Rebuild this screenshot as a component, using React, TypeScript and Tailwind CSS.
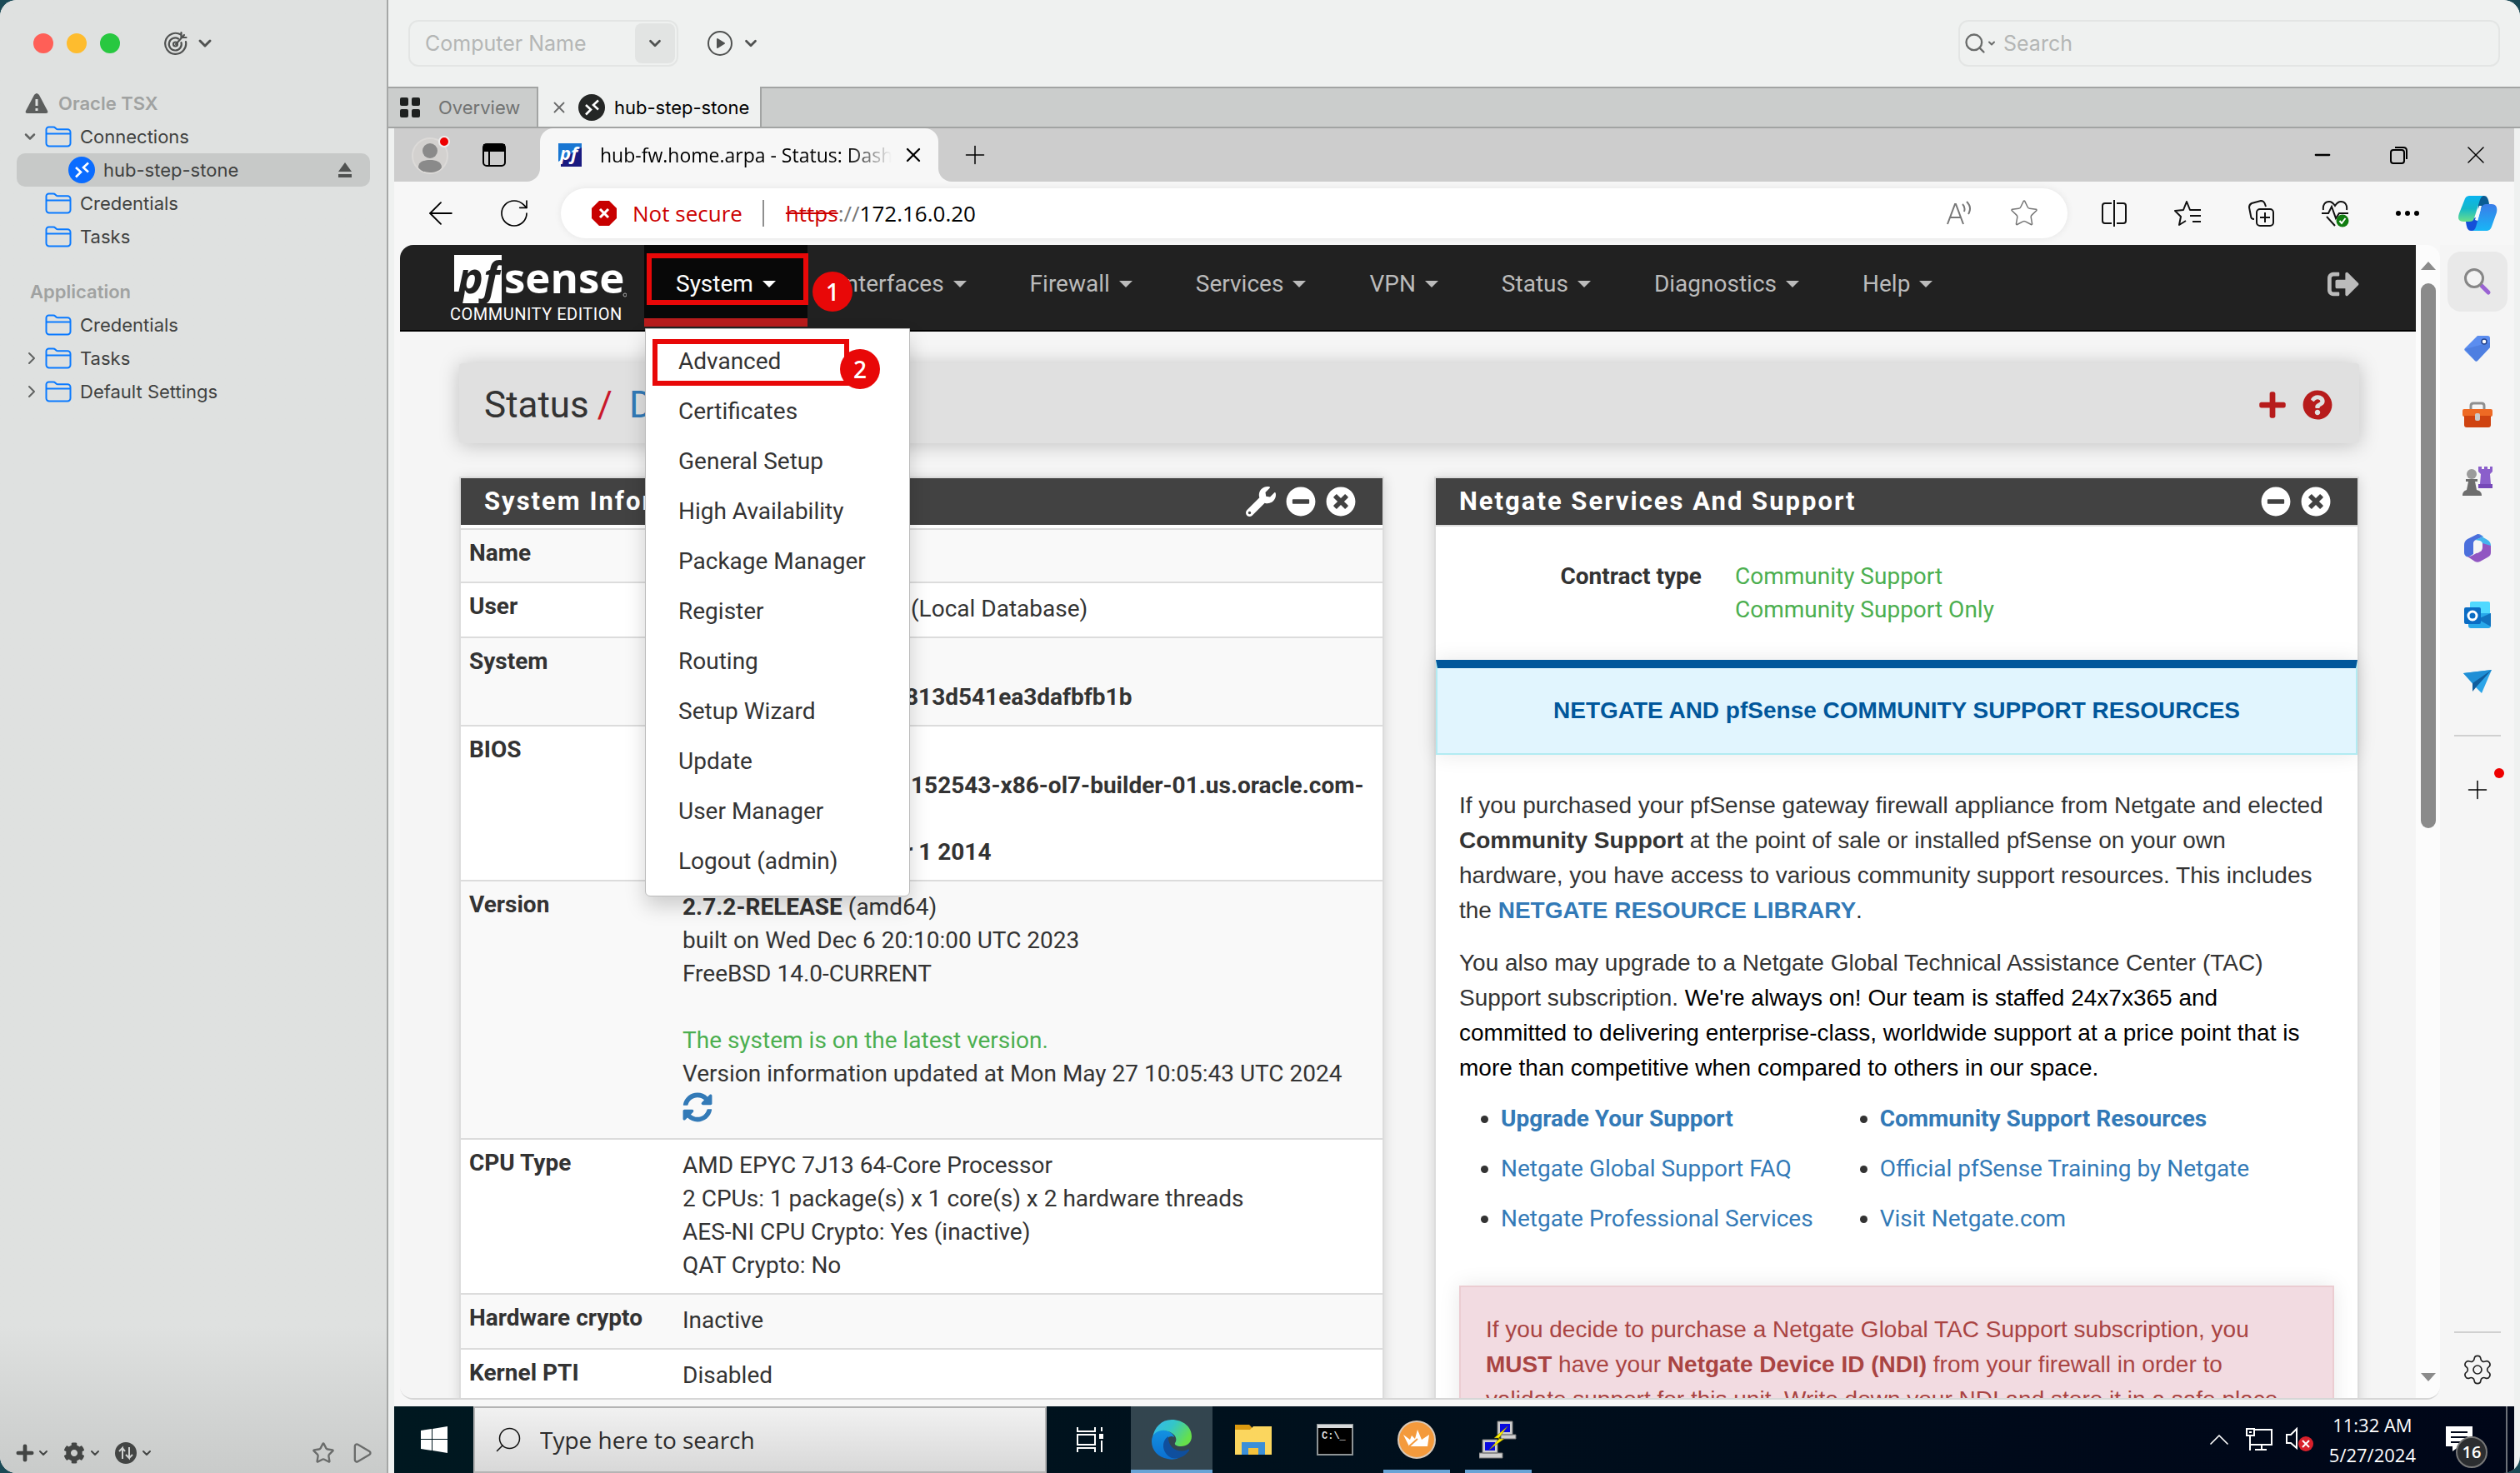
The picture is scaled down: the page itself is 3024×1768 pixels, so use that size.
import type { ReactNode } from "react";
import clsx from "clsx";
import {
  ArrowLeft,
  ChevronDown,
  ChevronRight,
  ChevronUp,
  Minus,
  Play,
  Plus,
  RotateCw,
  Search,
  Settings,
  Star,
  X,
} from "lucide-react";
import {
  FaCog,
  FaMinusCircle,
  FaPlus,
  FaQuestionCircle,
  FaSignOutAlt,
  FaSyncAlt,
  FaTimesCircle,
  FaWrench,
} from "react-icons/fa";

const navItems = ["Interfaces", "Firewall", "Services", "VPN", "Status", "Diagnostics", "Help"];

const systemMenu = [
  "Advanced",
  "Certificates",
  "General Setup",
  "High Availability",
  "Package Manager",
  "Register",
  "Routing",
  "Setup Wizard",
  "Update",
  "User Manager",
  "Logout (admin)",
];

/* ---------- small drawings ---------- */

function FolderIcon() {
  return (
    <svg viewBox="0 0 32 26" className="h-[26px] w-8 shrink-0" fill="none" stroke="#0a7aff" strokeWidth="2">
      <path d="M1.5 21V4.500a3 3 0 0 1 3-3h5.500c1.200 0 1.800.4 2.600 1.200l.8.8c.6.6 1.200.8 2 .8H27a3.500 3.500 0 0 1 3.500 3.500V21a3.500 3.500 0 0 1-3.500 3.500H5A3.500 3.500 0 0 1 1.500 21Z" />
      <path d="M1.500 9.500h29" />
    </svg>
  );
}

function RemoteIcon({ color }: { color: string }) {
  return (
    <svg viewBox="0 0 32 32" className="size-8 shrink-0">
      <circle cx="16" cy="16" r="16" fill={color} />
      <path d="m9 13 6 5.500-6 6M24 7.500l-6 5.500 6 5.500" fill="none" stroke="#fff" strokeWidth="2.600" />
    </svg>
  );
}

function TargetIcon() {
  return (
    <svg viewBox="0 0 30 30" className="size-[30px]" fill="none" stroke="#505251" strokeWidth="2.200" strokeLinecap="round">
      <path d="M21 4.500A12.500 12.500 0 1 0 27 13" />
      <path d="M18 9.500A7.500 7.500 0 1 0 21.500 14" />
      <path d="M15 16 25 5m-3.500-3v6h6" />
      <circle cx="14.500" cy="16" r="2.500" />
    </svg>
  );
}

function ConnectIcon() {
  return (
    <svg viewBox="0 0 32 32" className="size-8" fill="none" stroke="#505251" strokeWidth="2">
      <circle cx="16" cy="16" r="14" />
      <path d="m13 11 8 5-8 5Z" fill="#505251" strokeLinejoin="round" />
    </svg>
  );
}

function PfFavicon() {
  return (
    <svg viewBox="0 0 28 28" className="size-7 shrink-0">
      <path d="M0 0h28v6L0 22Z" fill="#1976d2" />
      <path d="M28 5v23H3v-8Z" fill="#1a1a80" />
      <text x="2" y="20" fontFamily="Open Sans" fontWeight="700" fontStyle="italic" fontSize="22" fill="#fff">
        pf
      </text>
    </svg>
  );
}

function PfSenseLogo() {
  return (
    <svg viewBox="0 0 212 60" className="h-[60px] w-[212px]" aria-label="pfSense">
      <path d="M5 1h57v8c-8-3-12 4-13 10h11l-1 5v35H10l4-14H5Z" fill="#fff" />
      <path d="M61 2h1v57H44Z" fill="#fff" />
      <text x="9" y="47" fontFamily="Open Sans" fontWeight="700" fontStyle="italic" fontSize="52" fill="#212121">
        pf
      </text>
      <text x="65" y="47" fontFamily="Open Sans" fontWeight="700" fontSize="51" fill="#fff">
        sense
      </text>
      <circle cx="210" cy="49" r="2" fill="none" stroke="#aaa" />
    </svg>
  );
}

function AvatarIcon() {
  return (
    <svg viewBox="0 0 48 48" className="size-12">
      <circle cx="23" cy="25" r="21" fill="#d3d1cf" stroke="#dcdad8" strokeWidth="2" />
      <circle cx="23" cy="19" r="9" fill="#8a8a8a" />
      <path d="M9 39c0-7 7-9 14-9s14 2 14 9c-5 8-23 8-28 0Z" fill="#8a8a8a" />
      <circle cx="40" cy="8" r="6" fill="#e00" stroke="#eee" strokeWidth="2" />
    </svg>
  );
}

function TabPaneIcon() {
  return (
    <svg viewBox="0 0 28 28" className="size-7" fill="none" stroke="#000" strokeWidth="2">
      <rect x="1" y="1" width="26" height="26" rx="4" />
      <path d="M2 2h24v7H2Z" fill="#000" />
      <path d="M8 9v18" />
    </svg>
  );
}

function ReadAloudIcon() {
  return (
    <svg viewBox="0 0 32 32" className="size-8" fill="none" stroke="#777" strokeWidth="2">
      <path d="m2 29 9-24h1l9 24M5 21h13M20 5c3 3 3 6 2 9M25 2c5 5 5 10 2 15" />
    </svg>
  );
}

function SplitIcon() {
  return (
    <svg viewBox="0 0 32 32" className="size-8" fill="none" stroke="#111" strokeWidth="2">
      <path d="M13 4H5a3 3 0 0 0-3 3v18a3 3 0 0 0 3 3h8M19 4h8a3 3 0 0 1 3 3v18a3 3 0 0 1-3 3h-8M16 0v32" />
    </svg>
  );
}

function FavoritesIcon() {
  return (
    <svg viewBox="0 0 32 32" className="size-8" fill="none" stroke="#111" strokeWidth="2" strokeLinejoin="round">
      <path d="M21 12h-2l-4-10-4 10-10 1 7 7-2 10 8-5M21 12h11M19 19h13M22 26h10" />
    </svg>
  );
}

function CollectionsIcon() {
  return (
    <svg viewBox="0 0 32 32" className="size-8" fill="none" stroke="#111" strokeWidth="2">
      <path d="M8 23c-3 0-4-1-4-4L2 9c0-3 1-4 3-5l11-3c3 0 4 1 5 4l1 3" />
      <rect x="11" y="11" width="20" height="20" rx="4" />
      <path d="M21 15v12M15 21h12" />
    </svg>
  );
}

function EssentialsIcon() {
  return (
    <svg viewBox="0 0 34 34" className="size-[34px]" fill="none" stroke="#111" strokeWidth="2">
      <path d="M3 13C2 7 5 3 10 3c3 0 5 2 7 5 2-3 4-5 7-5 5 0 8 4 7 10M1 17h8l4-8 5 14 4-6h11M7 21l10 11" />
      <circle cx="26" cy="26" r="7.500" fill="#107c10" stroke="none" />
      <path d="m22.500 26 2.500 3 4.500-6" stroke="#fff" />
    </svg>
  );
}

function CopilotIcon() {
  return (
    <svg viewBox="0 0 48 44" className="h-11 w-12">
      <defs>
        <linearGradient id="copilotLeft" x1="0" y1="0" x2="0" y2="1">
          <stop offset="0" stopColor="#0ab4f0" />
          <stop offset="0.500" stopColor="#14b8c8" />
          <stop offset="1" stopColor="#6be08a" />
        </linearGradient>
        <linearGradient id="copilotRight" x1="0" y1="0" x2="0" y2="1">
          <stop offset="0" stopColor="#3a7ce8" />
          <stop offset="1" stopColor="#18b6f6" />
        </linearGradient>
      </defs>
      <path d="M24 1h8c3 0 5 3 6 10l-13 8Z" fill="#0a5c94" />
      <path d="M24 43h-8c-4 0-5-4-6-11l14-6Z" fill="#1450d8" />
      <path d="M14 1h17c-3 1-4 4-5 8l-6 19c-1 3-3 4-6 4H7c-6 0-7-4-5-10L8 7c1-4 3-6 6-6Z" fill="url(#copilotLeft)" />
      <path d="M34 43H18c3-1 4-4 5-8l5-18c1-4 3-6 6-6h7c6 0 7 5 6 10l-6 17c-1 3-3 5-7 5Z" fill="url(#copilotRight)" />
      <path d="m21 30 5-17h3l-5 18Z" fill="#f4fbff" />
    </svg>
  );
}

function SideSearchIcon() {
  return (
    <svg viewBox="0 0 34 34" className="size-[34px]" fill="none">
      <path d="m22 22 8 8" stroke="#9a63d3" strokeWidth="5" strokeLinecap="round" />
      <circle cx="13" cy="13" r="10.500" fill="#f3f3f3" stroke="#868686" strokeWidth="3" />
    </svg>
  );
}

function TagIcon() {
  return (
    <svg viewBox="0 0 34 34" className="size-[34px]">
      <path d="M17 2h12c2 0 3 1 3 3v11L17 32c-1 1-2 1-3 0L2 20c-1-1-1-2 0-3Z" fill="#5b8def" />
      <path d="M2 18 32 10v6L17 32c-1 1-2 1-3 0Z" fill="#4676d7" opacity=".6" />
      <circle cx="25" cy="9" r="3" fill="#fff" stroke="#274690" strokeWidth="1.500" />
    </svg>
  );
}

function ToolboxIcon() {
  return (
    <svg viewBox="0 0 36 32" className="h-8 w-9">
      <path d="M10 9V5c0-2 1-3 3-3h10c2 0 3 1 3 3v4" fill="none" stroke="#8f8f8f" strokeWidth="3" />
      <rect y="9" width="36" height="9" rx="2" fill="#ee6a24" />
      <path d="M2 17h32v11c0 2-1 3-3 3H5c-2 0-3-1-3-3Z" fill="#cf4310" />
      <rect x="15" y="14" width="6" height="9" rx="2" fill="#c9c9c9" />
    </svg>
  );
}

function GamesIcon() {
  return (
    <svg viewBox="0 0 36 38" className="h-[38px] w-9">
      <path d="M19 1h4v3h3V1h4v3h3V1h3v6l-3 3 1 12H21l1-12-3-3Z" fill="#8b5fcb" />
      <path d="M19 22h17v5H19Z" fill="#7648b8" />
      <circle cx="11" cy="10" r="6" fill="#9b9b9b" />
      <path d="M4 16h14v3h-3l2 10c4 1 6 3 6 7H0c0-4 2-6 5-7l2-10H4Z" fill="#6d6d6d" />
    </svg>
  );
}

function Microsoft365Icon() {
  return (
    <svg viewBox="0 0 34 36" className="h-9 w-[34px]">
      <path d="M17 1 5 7c-3 2-4 4-4 7v9c0 4 3 6 6 5l5-3V12c0-2 1-3 3-4l9-4-3-2c-1-1-3-1-4-1Z" fill="#4b6fdc" />
      <path d="m17 1 12 7c3 2 4 4 4 7v8l-10-6v-4c0-2-1-3-3-4l-6-1 10-4Z" fill="#45b4ee" />
      <path d="M33 15v8c0 3-1 4-4 6l-9 5c-2 1-4 1-6 0L5 28c3 0 5-1 7-2l9-5c2-1 2-3 2-5v-4Z" fill="#9156c2" />
      <path d="m17 12 5 3v6l-5 3-5-3v-6Z" fill="#f5f5f5" />
    </svg>
  );
}

function OutlookIcon() {
  return (
    <svg viewBox="0 0 34 34" className="size-[34px]">
      <rect x="8" y="1" width="24" height="20" rx="2" fill="#50d9ff" />
      <path d="M6 15h27v15c0 2-1 3-3 3H9c-2 0-3-1-3-3Z" fill="#28a8ea" />
      <path d="M33 15v16L17 22Z" fill="#1173c0" />
      <rect x="1" y="8" width="20" height="20" rx="2" fill="#0a6cc4" />
      <circle cx="11" cy="18" r="5" fill="none" stroke="#fff" strokeWidth="3" />
    </svg>
  );
}

function DropIcon() {
  return (
    <svg viewBox="0 0 34 28" className="h-7 w-[34px]">
      <path d="M0 4 34 0 22 28l-7-7Z" fill="#2ba4e8" />
      <path d="m0 4 34-4-23 16Z" fill="#1f8fd6" />
      <path d="M11 16 34 0 16 20l-5 6Z" fill="#0f5d9e" />
    </svg>
  );
}

function WindowsLogo() {
  return (
    <svg viewBox="0 0 32 32" className="size-8" fill="#fff">
      <path d="m0 5 13-2v12H0ZM14 3l18-3v15H14ZM0 16h13v13L0 27ZM14 16h18v16l-18-3Z" />
    </svg>
  );
}

function TaskViewIcon() {
  return (
    <svg viewBox="0 0 32 32" className="size-8" fill="none" stroke="#fff" strokeWidth="2">
      <path d="M1 1v5h21V1M1 31v-5h21v5M1 10h21v12H1ZM30 1v5M30 17v14" />
      <path d="M27 9h6v6h-6Z" fill="#fff" stroke="none" />
    </svg>
  );
}

function EdgeIcon() {
  return (
    <svg viewBox="0 0 48 48" className="size-12">
      <defs>
        <linearGradient id="edgeTop" x1="0" y1="0" x2="1" y2="0.500">
          <stop offset="0" stopColor="#35b8f1" />
          <stop offset="0.500" stopColor="#34c6c8" />
          <stop offset="1" stopColor="#66e04a" />
        </linearGradient>
        <linearGradient id="edgeSide" x1="0" y1="0" x2="0" y2="1">
          <stop offset="0" stopColor="#1391e0" />
          <stop offset="1" stopColor="#0b6fd0" />
        </linearGradient>
      </defs>
      <path d="M1 22C3 9 12 0 24 0c14 0 24 9 24 20 0 8-6 12-13 12-5 0-8-2-7-4 3-4 1-9-4-12C15 11 5 14 1 22Z" fill="url(#edgeTop)" />
      <path d="M0 26c0-9 8-14 16-13 6 1 10 4 11 8-5-3-9 1-9 7 0 8 5 16 14 18-4 2-9 2-13 1C8 45 0 37 0 26Z" fill="url(#edgeSide)" />
      <path d="M20 20c-9 6-8 20 4 26 9 2 17-3 21-9 0-1 0-2-2-1-12 5-24-3-23-16Z" fill="#0f4f9e" />
    </svg>
  );
}

function ExplorerIcon() {
  return (
    <svg viewBox="0 0 44 36" className="h-9 w-11">
      <path d="M0 0h17l3 3v5H0Z" fill="#dc9a10" />
      <path d="M0 6h18l4-4h22v34H0Z" fill="#fbd65e" />
      <path d="M8 21h28v15h-8v-8H16v8H8Z" fill="#3b8fd8" />
      <path d="M16 28h12v8H16Z" fill="#f4c23c" />
    </svg>
  );
}

function TerminalIcon() {
  return (
    <svg viewBox="0 0 44 38" className="h-[38px] w-11">
      <rect x="1" y="1" width="42" height="36" fill="#000" stroke="#8e9496" strokeWidth="2" />
      <path d="M1 1h42v4H1Z" fill="#d7dadb" />
      <text x="6" y="18" fontFamily="Liberation Mono" fontWeight="700" fontSize="12" fill="#ddd">
        C:\_
      </text>
    </svg>
  );
}

function CrownIcon() {
  return (
    <svg viewBox="0 0 46 46" className="size-[46px]">
      <circle cx="23" cy="23" r="22" fill="#f49a3c" stroke="#d9c9b8" strokeWidth="2" />
      <path d="m7 17 8 6 2-5 4 4 3-11 5 12 9-6-2 14H14Z" fill="#fff" />
      <path d="m14 31 10-9" stroke="#f49a3c" strokeWidth="2" />
    </svg>
  );
}

function PuttyIcon() {
  return (
    <svg viewBox="0 0 46 48" className="h-12 w-[46px]">
      <path d="M22 2h18v16H22ZM26 18h18v5H26ZM4 24h18v16H4ZM0 40h28v6H0Z" fill="#cfcfcf" stroke="#777" />
      <path d="M25 5h12v10H25ZM7 27h12v10H7Z" fill="#0909e0" />
      <path d="M34 8 18 22h7L12 36l18-13h-7Z" fill="#ffee00" stroke="#776f00" strokeWidth=".5" />
    </svg>
  );
}

function NetworkIcon() {
  return (
    <svg viewBox="0 0 32 28" className="h-7 w-8" fill="none" stroke="#fff" strokeWidth="2">
      <path d="M10 2h21v18H6M19 20v6M11 26h14M1 1h9v8H1ZM5 9v18M4 5h3" />
    </svg>
  );
}

function VolumeMutedIcon() {
  return (
    <svg viewBox="0 0 34 30" className="h-[30px] w-[34px]">
      <path d="M1 9h5l7-7v23l-7-6H1Z" fill="none" stroke="#fff" strokeWidth="2" />
      <circle cx="24" cy="20" r="9" fill="#d9202b" />
      <path d="m20 16 8 8m0-8-8 8" stroke="#fff" strokeWidth="2" />
    </svg>
  );
}

/* ---------- connection manager ---------- */

function TreeRow({ label, toggle }: { label: string; toggle?: "open" | "closed" }) {
  return (
    <li className="flex h-10 items-center pl-[26px]">
      <span className="flex w-7 items-center text-[#626463]">
        {toggle === "open" && <ChevronDown className="size-5" strokeWidth={3} />}
        {toggle === "closed" && <ChevronRight className="size-6" strokeWidth={2} />}
      </span>
      <FolderIcon />
      <span className="ml-[10px]">{label}</span>
    </li>
  );
}

function Sidebar() {
  return (
    <aside className="flex w-[466px] shrink-0 flex-col border-r-2 border-[#a5a7a6] bg-linear-to-b from-[#dfe1e0] from-90% to-[#c9cbca] text-[22px] text-[#3f4140]">
      <div className="flex h-[104px] items-center pl-10">
        <div className="flex gap-4">
          <span className="size-6 rounded-full bg-[#ff5f57]" />
          <span className="size-6 rounded-full bg-[#febc2e]" />
          <span className="size-6 rounded-full bg-[#28c840]" />
        </div>
        <button className="ml-[52px] flex items-center gap-2" aria-label="View options">
          <TargetIcon />
          <ChevronDown className="size-6 text-[#505251]" strokeWidth={3} />
        </button>
      </div>

      <div className="flex h-10 items-center pl-[30px] font-semibold text-[#a0a2a1]">
        <svg viewBox="0 0 28 26" className="h-[26px] w-7">
          <path d="M14 1c1 0 2 1 3 2l10 19c1 2 0 3-2 3H3c-2 0-3-1-2-3L11 3c1-1 2-2 3-2Z" fill="#5c5e5d" />
          <path d="M14 8v8M14 19v3" stroke="#dfe1e0" strokeWidth="3" />
        </svg>
        <h2 className="ml-3">Oracle TSX</h2>
      </div>
      <ul>
        <TreeRow label="Connections" toggle="open" />
        <li className="mr-5 ml-5 flex h-10 items-center rounded-[10px] bg-[#c7c9c8] pr-[22px] pl-[62px]">
          <RemoteIcon color="#0a6cff" />
          <span className="ml-[10px] flex-1">hub-step-stone</span>
          <button aria-label="Disconnect">
            <svg viewBox="0 0 16 18" className="h-[18px] w-4" fill="#505251">
              <path d="m8 0 8 11H0ZM0 14h16v4H0Z" />
            </svg>
          </button>
        </li>
        <TreeRow label="Credentials" />
        <TreeRow label="Tasks" />
      </ul>

      <h2 className="mt-[26px] flex h-10 items-center pl-9 font-semibold text-[#a0a2a1]">Application</h2>
      <ul>
        <TreeRow label="Credentials" />
        <TreeRow label="Tasks" toggle="closed" />
        <TreeRow label="Default Settings" toggle="closed" />
      </ul>

      <div className="mt-auto flex h-12 items-center pr-4 pl-4 text-[#434544]">
        <button className="flex items-center" aria-label="Add">
          <Plus className="size-7" strokeWidth={4} />
          <ChevronDown className="size-4" strokeWidth={3} />
        </button>
        <button className="ml-4 flex items-center gap-1" aria-label="Settings">
          <FaCog className="size-[26px]" />
          <ChevronDown className="size-4" strokeWidth={3} />
        </button>
        <button className="ml-4 flex items-center gap-1" aria-label="Sort">
          <svg viewBox="0 0 26 26" className="size-[26px]">
            <circle cx="13" cy="13" r="13" fill="#434544" />
            <path d="M9 20V7L5 11M9 7l3 4M17 6v13l-4-4M17 19l4-4" fill="none" stroke="#d0d2d1" strokeWidth="2" />
          </svg>
          <ChevronDown className="size-4" strokeWidth={3} />
        </button>
        <button className="ml-auto" aria-label="Favorite">
          <Star className="size-7 text-[#6a6c6b]" strokeWidth={2} />
        </button>
        <button className="ml-[18px]" aria-label="Run">
          <Play className="size-7 text-[#6a6c6b]" strokeWidth={2} />
        </button>
      </div>
    </aside>
  );
}

function HostToolbar() {
  return (
    <div className="flex h-[104px] shrink-0 items-center bg-[#eff1f0] pr-6 pl-6">
      <div className="flex h-14 w-[324px] items-center rounded-xl border-2 border-[#e3e5e4] pr-[2px]">
        <input
          aria-label="Computer name"
          placeholder="Computer Name"
          className="min-w-0 flex-1 pt-[2px] pl-[18px] text-[25px] outline-none placeholder:text-[#b4b6b5]"
        />
        <button className="flex h-12 w-12 items-center justify-center rounded-lg bg-[#e2e4e3]" aria-label="Recent computers">
          <ChevronDown className="size-[22px] text-[#505251]" strokeWidth={3} />
        </button>
      </div>
      <button className="ml-[34px] flex items-center gap-[10px] text-[#505251]" aria-label="Connect">
        <ConnectIcon />
        <ChevronDown className="size-[22px]" strokeWidth={3} />
      </button>
      <label className="ml-auto flex h-14 w-[650px] items-center rounded-xl border-2 border-[#e3e5e4] pl-1">
        <Search className="size-7 text-[#6a6c6b]" strokeWidth={2} />
        <ChevronDown className="size-3 text-[#6a6c6b]" strokeWidth={4} />
        <input
          aria-label="Search"
          placeholder="Search"
          className="ml-2 min-w-0 flex-1 pt-[2px] text-[25px] outline-none placeholder:text-[#b4b6b5]"
        />
      </label>
    </div>
  );
}

function HostTabs() {
  return (
    <div className="flex h-[50px] shrink-0 border-b-2 border-[#a2a4a3] bg-[#cbcdcc] text-[22px]">
      <button className="flex w-[180px] items-center border-t-2 border-r-2 border-[#a2a4a3] pl-[14px] text-[#717372]">
        <svg viewBox="0 0 24 24" className="size-6" fill="#1e201f">
          <rect width="10" height="10" rx="2" />
          <rect x="14" width="10" height="10" rx="2" />
          <rect y="14" width="10" height="10" rx="2" />
          <rect x="14" y="14" width="10" height="10" rx="2" />
        </svg>
        <span className="ml-[22px]">Overview</span>
      </button>
      <button className="flex w-[266px] items-center bg-[#eff1f0] pt-[2px] pl-[14px] text-black">
        <X className="size-[22px] text-[#6a6c6b]" strokeWidth={2} />
        <span className="ml-3 flex">
          <RemoteIcon color="#242625" />
        </span>
        <span className="ml-[11px]">hub-step-stone</span>
      </button>
      <div className="flex-1 border-t-2 border-l-2 border-[#a2a4a3]" />
    </div>
  );
}

/* ---------- browser chrome ---------- */

function BrowserTabs() {
  return (
    <div className="flex h-16 shrink-0 items-center bg-[#cdcdcd] font-['Open_Sans',sans-serif]">
      <div className="h-16 w-[175px] bg-[#f7f7f7]">
        <div className="flex h-16 items-center rounded-br-2xl bg-[#cdcdcd] pl-5">
          <button aria-label="Profile">
            <AvatarIcon />
          </button>
          <button className="ml-[38px]" aria-label="Tab actions">
            <TabPaneIcon />
          </button>
        </div>
      </div>
      <div className="flex h-16 w-[478px] items-center rounded-t-2xl bg-[#f7f7f7] pr-4 pl-[22px]">
        <PfFavicon />
        <span className="ml-[22px] flex-1 overflow-hidden bg-linear-to-r from-black from-85% to-transparent bg-clip-text text-[23px] whitespace-nowrap text-transparent">
          hub-fw.home.arpa - Status: Dash
        </span>
        <button className="ml-3" aria-label="Close tab">
          <X className="size-7" strokeWidth={2} />
        </button>
      </div>
      <div className="h-16 flex-1 bg-[#f7f7f7]">
        <div className="flex h-16 items-center rounded-bl-2xl bg-[#cdcdcd]">
          <button className="ml-[26px]" aria-label="New tab">
            <Plus className="size-9" strokeWidth={1} />
          </button>
          <div className="ml-auto flex">
            <button className="flex w-[92px] items-center justify-center" aria-label="Minimize">
              <Minus className="size-7" strokeWidth={2} />
            </button>
            <button className="flex w-[92px] items-center justify-center" aria-label="Restore">
              <svg viewBox="0 0 22 22" className="size-[22px]" fill="none" stroke="#000" strokeWidth="2">
                <rect x="1" y="5" width="16" height="16" rx="3" />
                <path d="M6 2h10c3 0 4 2 4 4v10" />
              </svg>
            </button>
            <button className="flex w-[92px] items-center justify-center" aria-label="Close">
              <X className="size-9" strokeWidth={1} />
            </button>
          </div>
        </div>
      </div>
    </div>
  );
}

function AddressRow() {
  return (
    <div className="flex h-[76px] shrink-0 items-center bg-[#f7f7f7] pr-5 font-['Open_Sans',sans-serif] text-[26px]">
      <button className="ml-[34px]" aria-label="Back">
        <ArrowLeft className="size-11" strokeWidth={1} />
      </button>
      <button className="ml-[46px]" aria-label="Reload">
        <RotateCw className="size-10" strokeWidth={1} />
      </button>
      <div className="ml-9 flex h-[60px] flex-1 items-center rounded-full bg-white pr-[34px] pl-9 shadow-[0_0_10px_#00000014]">
        <svg viewBox="0 0 32 32" className="size-8">
          <path d="M10 1h12l9 9v12l-9 9H10l-9-9V10Z" fill="#c80000" />
          <path d="m11 11 10 10m0-10L11 21" stroke="#fff" strokeWidth="3" />
        </svg>
        <span className="ml-[18px] text-[#c00]">Not secure</span>
        <span className="mr-[26px] ml-6 h-8 w-[2px] bg-[#8f8f8f]" />
        <span className="flex-1">
          <span className="text-[#c00] line-through">https</span>
          <span className="text-[#767676]">://</span>
          172.16.0.20
        </span>
        <button aria-label="Read aloud">
          <ReadAloudIcon />
        </button>
        <button className="ml-11" aria-label="Add to favorites">
          <Star className="size-9 text-[#777]" strokeWidth={1} />
        </button>
      </div>
      <div className="ml-10 flex items-center gap-14">
        <button aria-label="Split screen">
          <SplitIcon />
        </button>
        <button aria-label="Favorites">
          <FavoritesIcon />
        </button>
        <button aria-label="Collections">
          <CollectionsIcon />
        </button>
        <button aria-label="Browser essentials">
          <EssentialsIcon />
        </button>
        <button aria-label="More">
          <svg viewBox="0 0 28 6" className="h-[6px] w-7">
            <circle cx="3" cy="3" r="3" />
            <circle cx="14" cy="3" r="3" />
            <circle cx="25" cy="3" r="3" />
          </svg>
        </button>
      </div>
      <button className="ml-[46px]" aria-label="Copilot">
        <CopilotIcon />
      </button>
    </div>
  );
}

function SideButton({ label, active, children }: { label: string; active?: boolean; children: ReactNode }) {
  return (
    <button
      aria-label={label}
      className={clsx("flex h-[72px] w-[72px] items-center justify-center rounded-2xl", active && "bg-[#e9e9e9]")}
    >
      {children}
    </button>
  );
}

function EdgeSidebar() {
  return (
    <div className="flex w-[89px] shrink-0 flex-col items-center bg-[#f5f5f5] pt-2">
      <div className="flex flex-col gap-2">
        <SideButton label="Search" active>
          <SideSearchIcon />
        </SideButton>
        <SideButton label="Shopping">
          <TagIcon />
        </SideButton>
        <SideButton label="Tools">
          <ToolboxIcon />
        </SideButton>
        <SideButton label="Games">
          <GamesIcon />
        </SideButton>
        <SideButton label="Microsoft 365">
          <Microsoft365Icon />
        </SideButton>
        <SideButton label="Outlook">
          <OutlookIcon />
        </SideButton>
        <SideButton label="Drop">
          <DropIcon />
        </SideButton>
      </div>
      <hr className="mt-7 w-14 border-t-2 border-[#d0d0d0]" />
      <div className="relative mt-7">
        <SideButton label="Customize">
          <Plus className="size-9" strokeWidth={1} />
        </SideButton>
        <span className="absolute top-[10px] right-1 size-3 rounded-full bg-[#e00]" />
      </div>
      <hr className="mt-auto w-14 border-t-2 border-[#d0d0d0]" />
      <div className="mt-2 mb-2">
        <SideButton label="Sidebar settings">
          <Settings className="size-10 text-[#222]" strokeWidth={1} />
        </SideButton>
      </div>
    </div>
  );
}

/* ---------- pfSense page ---------- */

function Caret() {
  return (
    <svg viewBox="0 0 16 8" className="ml-[11px] h-2 w-4" fill="currentColor">
      <path d="M0 0h16L8 8Z" />
    </svg>
  );
}

function StepBadge({ children, className }: { children: ReactNode; className: string }) {
  return (
    <span
      className={clsx(
        "absolute z-30 flex size-12 items-center justify-center rounded-full bg-[#e80808] font-['Open_Sans',sans-serif] text-[28px] font-semibold text-white",
        className
      )}
    >
      {children}
    </span>
  );
}

function PfHeader() {
  return (
    <header className="relative z-20 flex h-[104px] shrink-0 border-b-2 border-black bg-[#212121] text-[28px] leading-10">
      <a href="#" className="flex w-[293px] flex-col pt-[11px] pl-[60px]">
        <PfSenseLogo />
        <span className="text-[20px] leading-6 tracking-wide text-white">COMMUNITY EDITION</span>
      </a>
      <nav className="flex flex-1">
        <div className="relative">
          <button className="flex h-[98px] items-center border-b-10 border-[#b71c1c] bg-[#080808] px-[38px] pt-[6px] text-white">
            System
            <Caret />
          </button>
          <span className="absolute top-[10px] left-[3px] h-[62px] w-[194px] border-6 border-[#e80808]" />
          <StepBadge className="top-8 left-[202px]">1</StepBadge>

          <ul className="absolute top-[100px] left-px w-[318px] rounded-b-md border border-[#bbb] bg-white pt-[9px] pb-[11px] shadow-[0_12px_24px_#0000002d]">
            {systemMenu.map((item) => (
              <li key={item} className="h-[60px]">
                <a href="#" className="flex h-full items-center pl-[39px] text-[#333]">
                  {item}
                </a>
              </li>
            ))}
            <li aria-hidden className="absolute top-3 left-2 h-14 w-[236px] border-6 border-[#e80808]" />
            <li aria-hidden>
              <StepBadge className="top-6 left-[233px]">2</StepBadge>
            </li>
          </ul>
        </div>
        {navItems.map((item) => (
          <button key={item} className="flex h-[94px] items-center px-[38px] text-[#bbb]">
            {item}
            <Caret />
          </button>
        ))}
      </nav>
      <button className="mr-[68px] h-[94px] text-[#bbb]" aria-label="Logout">
        <FaSignOutAlt className="size-[38px]" />
      </button>
    </header>
  );
}

function Panel({ title, wrench, children }: { title: string; wrench?: boolean; children: ReactNode }) {
  return (
    <section className="border-2 border-[#dcdcdc] bg-white shadow-[0_2px_14px_#00000024]">
      <div className="flex h-14 items-center gap-3 bg-[#424242] pr-8 pl-7 text-white">
        <h2 className="flex-1 text-[31px] leading-10 font-bold tracking-[2px]">{title}</h2>
        {wrench && (
          <button aria-label="Configure">
            <FaWrench className="size-9" />
          </button>
        )}
        <button aria-label="Minimize panel">
          <FaMinusCircle className="size-9" />
        </button>
        <button aria-label="Close panel">
          <FaTimesCircle className="size-9" />
        </button>
      </div>
      {children}
    </section>
  );
}

function InfoRow({ label, children }: { label: string; children?: ReactNode }) {
  return (
    <tr className="border-t-2 border-[#dcdcdc] align-top odd:bg-[#f9f9f9]">
      <th scope="row" className="w-[256px] pt-2 pl-[10px] text-left font-bold whitespace-nowrap">
        {label}
      </th>
      <td className="h-16 pt-[11px] pb-[13px] pl-[10px]">{children}</td>
    </tr>
  );
}

function SystemInformation() {
  return (
    <Panel title="System Information" wrench>
      <table className="mt-1 w-full border-collapse text-[28px] leading-10">
        <tbody>
          <InfoRow label="Name" />
          <InfoRow label="User">
            <span className="pl-[274px]">(Local Database)</span>
          </InfoRow>
          <InfoRow label="System">
            <br />
            <b className="pl-[267px]">813d541ea3dafbfb1b</b>
          </InfoRow>
          <InfoRow label="BIOS">
            <br />
            <b className="pl-[274px] whitespace-nowrap">152543-x86-ol7-builder-01.us.oracle.com-</b>
            <br />
            <br />
            <b className="pl-[266px]">r 1 2014</b>
          </InfoRow>
          <InfoRow label="Version">
            <b>2.7.2-RELEASE</b> (amd64)
            <br />
            built on Wed Dec 6 20:10:00 UTC 2023
            <br />
            FreeBSD 14.0-CURRENT
            <br />
            <br />
            <span className="text-[#4caf50]">The system is on the latest version.</span>
            <br />
            Version information updated at Mon May 27 10:05:43 UTC 2024
            <br />
            <button className="flex h-11 items-start pt-[2px] text-[#337ab7]" aria-label="Refresh version">
              <FaSyncAlt className="size-9" />
            </button>
          </InfoRow>
          <InfoRow label="CPU Type">
            AMD EPYC 7J13 64-Core Processor
            <br />
            2 CPUs: 1 package(s) x 1 core(s) x 2 hardware threads
            <br />
            AES-NI CPU Crypto: Yes (inactive)
            <br />
            QAT Crypto: No
          </InfoRow>
          <InfoRow label="Hardware crypto">Inactive</InfoRow>
          <InfoRow label="Kernel PTI">Disabled</InfoRow>
        </tbody>
      </table>
    </Panel>
  );
}

function NetgateSupport() {
  return (
    <Panel title="Netgate Services And Support">
      <dl className="flex gap-10 border-t-2 border-[#dcdcdc] pt-10 pb-10 text-[28px] leading-10">
        <dt className="w-[319px] text-right font-bold">Contract type</dt>
        <dd className="text-[#4caf50]">
          Community Support
          <br />
          Community Support Only
        </dd>
      </dl>
      <div className="font-['Liberation_Sans',Arial,sans-serif] text-[28px] leading-[42px]">
        <h3 className="border-2 border-t-10 border-[#b2ebf2] border-t-[#01579b] bg-[#e1f5fe] py-[30px] text-center font-bold text-[#01579b] shadow-[0_0_24px_#00000018]">
          NETGATE AND pfSense COMMUNITY SUPPORT RESOURCES
        </h3>
        <div className="px-7 pt-10">
          <p className="pr-2">
            If you purchased your pfSense gateway firewall appliance from Netgate and elected <b>Community Support</b> at
            the point of sale or installed pfSense on your own hardware, you have access to various community support
            resources. This includes the{" "}
            <a href="#" className="font-bold text-[#337ab7]">
              NETGATE RESOURCE LIBRARY
            </a>
            .
          </p>
          <p className="mt-[21px] pr-2">
            You also may upgrade to a Netgate Global Technical Assistance Center (TAC) Support subscription.{" "}
            <span className="text-black">
              We're always on! Our team is staffed 24x7x365 and committed to delivering enterprise-class, worldwide
              support at a price point that is more than competitive when compared to others in our space.
            </span>
          </p>
          <div className="mt-[10px] flex gap-20 pl-[50px] font-[Roboto,sans-serif] leading-[60px] text-[#337ab7]">
            <ul className="list-disc marker:text-[#333]">
              <li>
                <a href="#" className="font-bold">
                  Upgrade Your Support
                </a>
              </li>
              <li>
                <a href="#">Netgate Global Support FAQ</a>
              </li>
              <li>
                <a href="#">Netgate Professional Services</a>
              </li>
            </ul>
            <ul className="list-disc marker:text-[#333]">
              <li>
                <a href="#" className="font-bold">
                  Community Support Resources
                </a>
              </li>
              <li>
                <a href="#">Official pfSense Training by Netgate</a>
              </li>
              <li>
                <a href="#">Visit Netgate.com</a>
              </li>
            </ul>
          </div>
          <div className="mt-[50px] border-2 border-[#ebccd1] bg-[#f2dbe1] px-[30px] py-[30px] text-[#a94442] shadow-[0_0_24px_#00000018]">
            If you decide to purchase a Netgate Global TAC Support subscription, you <b>MUST</b> have your{" "}
            <b>Netgate Device ID (NDI)</b> from your firewall in order to validate support for this unit. Write down your
            NDI and store it in a safe place.
          </div>
        </div>
      </div>
    </Panel>
  );
}

function PfPage() {
  return (
    <main className="flex min-w-0 flex-1 flex-col overflow-hidden bg-[#f5f5f5] font-[Roboto,sans-serif] text-[#333]">
      <PfHeader />
      <div className="flex min-h-0 flex-1 flex-col gap-10 pt-[38px] pr-[68px] pl-[71px]">
        <div className="flex h-24 shrink-0 items-center rounded-sm bg-[#e0e0e0] pt-1 pr-8 pl-[30px] shadow-[0_2px_24px_#00000038]">
          <h1 className="flex flex-1 text-[44px]">
            Status
            <span className="ml-[10px] text-[#c9182b]">/</span>
            <a href="#" className="ml-5 text-[#337ab7]">
              Dashboard
            </a>
          </h1>
          <div className="flex gap-[18px] text-[#b71c1c]">
            <button aria-label="Add widget">
              <FaPlus className="size-9" />
            </button>
            <button aria-label="Help">
              <FaQuestionCircle className="size-9" />
            </button>
          </div>
        </div>
        <div className="grid min-h-0 flex-1 grid-cols-2 items-start gap-[60px]">
          <SystemInformation />
          <NetgateSupport />
        </div>
      </div>
    </main>
  );
}

function PageScrollbar() {
  return (
    <div className="flex w-[29px] shrink-0 flex-col items-center bg-[#fcfcfc] pt-5 pb-5">
      <svg viewBox="0 0 18 10" className="h-[10px] w-[18px]" fill="#8b8b8b">
        <path d="m9 0 9 10H0Z" />
      </svg>
      <div className="mt-4 w-[18px] grow-[50] rounded-full bg-[#8b8b8b]" />
      <div className="grow-[50]" />
      <svg viewBox="0 0 18 10" className="h-[10px] w-[18px]" fill="#8b8b8b">
        <path d="m9 10 9-10H0Z" />
      </svg>
    </div>
  );
}

/* ---------- windows taskbar ---------- */

function TaskButton({ label, state, children }: { label: string; state?: "active" | "running"; children: ReactNode }) {
  return (
    <button
      aria-label={label}
      className={clsx("flex w-[98px] flex-col items-center pt-1", state === "active" && "bg-[#33454f]")}
    >
      <span className="flex flex-1 items-center">{children}</span>
      <span
        className={clsx(
          "h-1",
          state === "active" && "w-full bg-[#69a3d5]",
          state === "running" && "w-20 bg-[#69a3d5]"
        )}
      />
    </button>
  );
}

function Taskbar() {
  return (
    <footer className="flex h-20 shrink-0 bg-linear-to-r from-[#001820] to-[#000618] font-['Open_Sans',sans-serif] text-white">
      <button className="flex w-[95px] items-center justify-center" aria-label="Start">
        <WindowsLogo />
      </button>
      <label className="mr-[3px] flex w-[688px] items-center border-2 border-[#b4b4b4] bg-linear-to-b from-[#f1f1f1] to-[#d8d8d8] pl-[22px]">
        <Search className="size-9 -scale-x-100 text-[#111]" strokeWidth={1} />
        <input
          aria-label="Type here to search"
          placeholder="Type here to search"
          className="ml-5 min-w-0 flex-1 text-[28px] outline-none placeholder:text-[#2b2b2b]"
        />
      </label>
      <TaskButton label="Task view">
        <TaskViewIcon />
      </TaskButton>
      <TaskButton label="Microsoft Edge" state="active">
        <EdgeIcon />
      </TaskButton>
      <TaskButton label="File Explorer">
        <ExplorerIcon />
      </TaskButton>
      <TaskButton label="Command Prompt">
        <TerminalIcon />
      </TaskButton>
      <TaskButton label="Royal Server" state="running">
        <CrownIcon />
      </TaskButton>
      <TaskButton label="PuTTY" state="running">
        <PuttyIcon />
      </TaskButton>

      <div className="ml-auto flex items-center">
        <button aria-label="Show hidden icons">
          <ChevronUp className="size-10" strokeWidth={1} />
        </button>
        <button className="ml-3" aria-label="Network">
          <NetworkIcon />
        </button>
        <button className="ml-4" aria-label="Volume">
          <VolumeMutedIcon />
        </button>
        <button className="ml-[18px] flex flex-col items-center text-[22px] leading-9">
          <span>11:32 AM</span>
          <span>5/27/2024</span>
        </button>
        <button className="relative ml-9" aria-label="Notifications">
          <svg viewBox="0 0 32 32" className="size-8">
            <path d="M0 0h32v24H16l-8 6v-6H0Z" fill="#fff" />
            <path d="M6 7h20M6 13h20M6 19h20" stroke="#000618" strokeWidth="2" />
          </svg>
          <span className="absolute top-3 left-3 flex size-[38px] items-center justify-center rounded-full border-2 border-[#777] bg-[#2b2d30] text-[20px] font-semibold">
            16
          </span>
        </button>
        <span className="mr-2 ml-10 h-20 w-[2px] bg-[#6c7078]" />
      </div>
    </footer>
  );
}

export default function App() {
  return (
    <div className="h-screen bg-[#1b4a56] font-[Inter,sans-serif]">
      <div className="flex h-full overflow-hidden rounded-[20px] bg-[#eff1f0]">
        <Sidebar />
        <div className="flex min-w-0 flex-1 flex-col">
          <HostToolbar />
          <HostTabs />
          <div className="flex min-h-0 flex-1 flex-col px-[7px] text-black">
            <BrowserTabs />
            <AddressRow />
            <div className="flex min-h-0 flex-1 bg-[#f7f7f7] pl-[7px]">
              <div className="mb-2 flex min-w-0 flex-1 overflow-hidden rounded-2xl border-b-2 border-[#d6d6d6]">
                <PfPage />
                <PageScrollbar />
              </div>
              <EdgeSidebar />
            </div>
            <Taskbar />
          </div>
        </div>
      </div>
    </div>
  );
}
